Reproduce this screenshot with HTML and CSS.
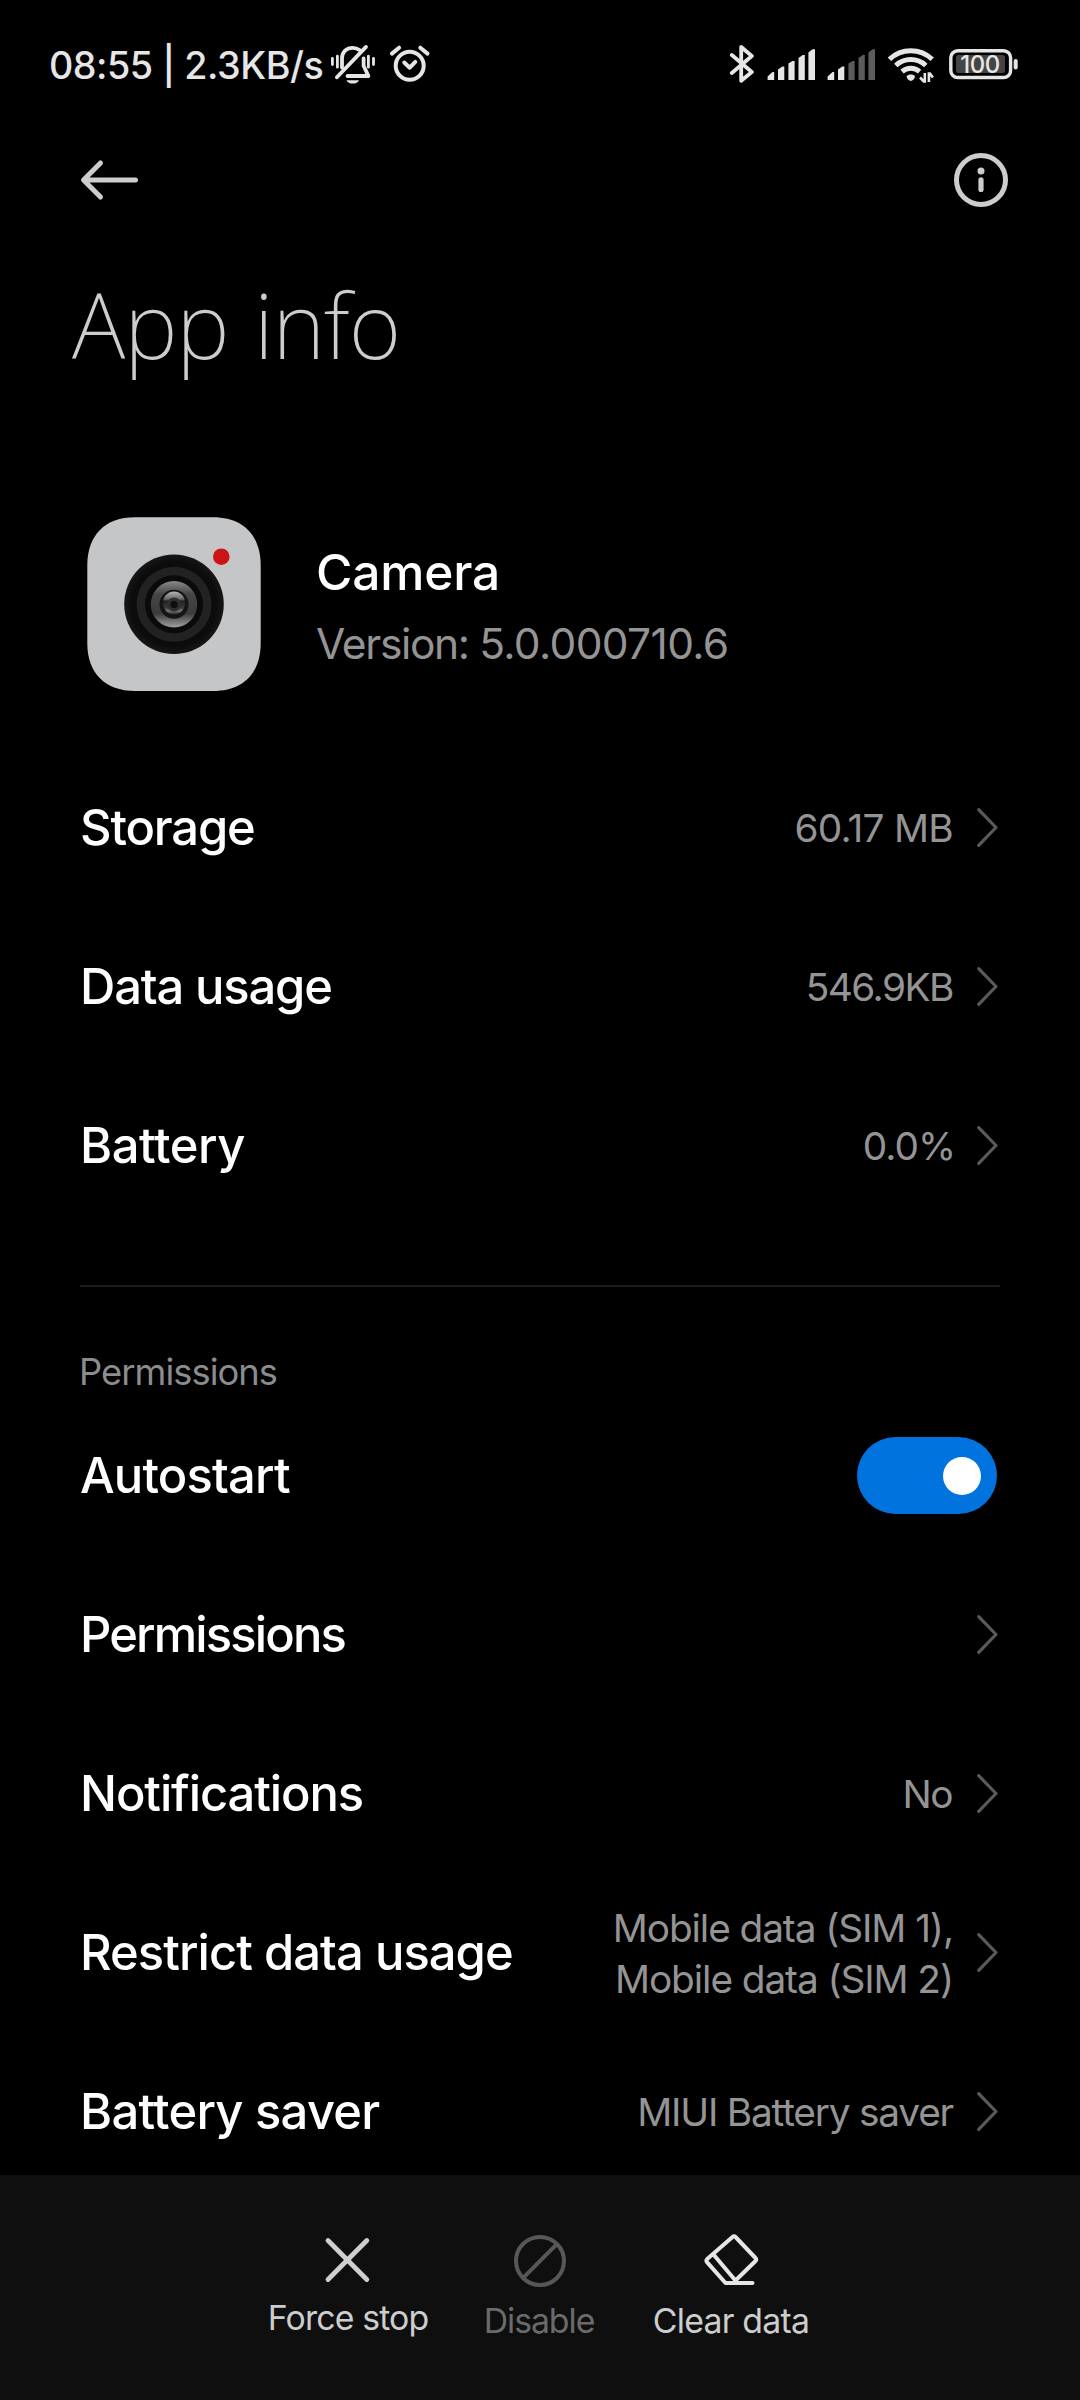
FILE: index.html
```html
<!DOCTYPE html>
<html lang="en">
<head>
<meta charset="utf-8">
<title>App info</title>
<link rel="stylesheet" href="styles.css">
</head>
<body>
<svg class="defs" aria-hidden="true">
  <symbol id="chevron" viewBox="0 0 24 44"><path d="M2.700 3.700 20 21.500 2.700 39.300" fill="none" stroke="#5a5a5a" stroke-width="3.200" stroke-linecap="round" stroke-linejoin="round"/></symbol>
</svg>
<div class="screen">
  <header class="status">
    <span class="status__text">08:55 | 2.3KB/s</span>
    <svg class="status__bell" width="46" height="44" viewBox="0 0 46 44" fill="none" stroke="#e6e6e6" stroke-width="3.800" stroke-linecap="round" stroke-linejoin="round">
      <path d="M2.400 15.300v6.200M7.400 13.200v11M38.400 13.200v11M43.500 15.300v6.200" stroke-width="2.800"/>
      <path d="M12 24.500V15.600C12 9 16.500 4.800 22.700 4.800c2.800 0 5 .8 6.800 2.200M33.600 15.500v7.200l4.800 10.300H17.500"/>
      <path d="M6.900 34.300 36 3.900"/>
      <path d="M16.500 37.200h12.500c-1.500 4.500-11 4.500-12.500 0z" fill="#e6e6e6" stroke="none"/>
    </svg>
    <svg class="status__alarm" width="42" height="44" viewBox="0 0 42 44" fill="none" stroke="#e6e6e6" stroke-width="4" stroke-linecap="round" stroke-linejoin="round">
      <circle cx="20.700" cy="22.700" r="14"/>
      <path d="m15.300 19.500 5.400 5.200 5.600-5.800"/>
      <path d="m2.900 10.600 7.200-5.900M31.300 4.700l7.200 5.900"/>
    </svg>
    <svg class="status__bt" width="25" height="44" viewBox="0 0 25 44" fill="none" stroke="#e6e6e6" stroke-width="3.800" stroke-linecap="round" stroke-linejoin="round"><path d="m2.800 12 20 17L12.200 37.700V4L22.800 13l-20 17"/></svg>
    <svg class="status__signal" width="48" height="44" viewBox="0 0 48 44" fill="#e6e6e6">
      <path d="M.6 37V33.500L5.500 29H7.200V37z"/><path d="M11 37V26.500L15.300 23.500H17.300V37z"/><path d="M21.400 37V20.500L25.500 18H27.600V37z"/><path d="M31.500 37V15L35.700 12H37.800V37z"/><path d="M41.400 37V9.500L45.500 6.300H48V37z"/>
    </svg>
    <svg class="status__signal2" width="48" height="44" viewBox="0 0 48 44" fill="#5c5c5c">
      <path fill="#e6e6e6" d="M.6 37V33.500L5.500 29H7.200V37z"/><path fill="#e6e6e6" d="M11 37V26.500L15.300 23.500H17.300V37z"/><path d="M21.400 37V20.500L25.500 18H27.600V37z"/><path d="M31.500 37V15L35.700 12H37.800V37z"/><path d="M41.400 37V9.500L45.500 6.300H48V37z"/>
    </svg>
    <svg class="status__wifi" width="48" height="44" viewBox="0 0 48 44" fill="none" stroke="#e6e6e6" stroke-width="5">
      <path d="M2.400 16.200a31 31 0 0 1 42.800 0M8.800 22.500a22 22 0 0 1 30 0M15 28.600a13.500 13.500 0 0 1 17.600 0"/>
      <path d="M19.500 33.500c2-2.600 6.600-2.600 8.600 0-.6 2.600-2.600 4.400-4.300 4.400s-3.700-1.800-4.300-4.400z" fill="#e6e6e6" stroke="none"/>
      <path d="M37.800 30v8.500h-1l-3.800-4M41.900 39v-8.500h1l3 4" stroke-width="2.600"/>
    </svg>
    <svg class="status__battery" width="71" height="44" viewBox="0 0 71 44">
      <rect x="2.800" y="7.700" width="59.800" height="26.800" rx="7" fill="none" stroke="#e6e6e6" stroke-width="3.400"/>
      <rect x="8" y="12" width="49" height="18" rx="2.500" fill="#444"/>
      <rect x="65.700" y="16" width="4" height="10.500" rx="2" fill="#e6e6e6"/>
      <text class="status__level" x="32" y="30" text-anchor="middle">100</text>
    </svg>
  </header>

  <nav class="topbar">
    <svg width="64" height="50" viewBox="0 0 64 50" fill="none" stroke="#cdcdcd" stroke-width="5" stroke-linecap="round" stroke-linejoin="round"><path d="M58.500 25H7M23.500 8 6.500 25l17 17"/></svg>
    <svg width="56" height="56" viewBox="0 0 56 56" fill="#cdcdcd"><circle cx="28" cy="28" r="24.500" fill="none" stroke="#cdcdcd" stroke-width="5"/><circle cx="28" cy="19" r="3.500"/><rect x="25.400" y="25.300" width="5.200" height="14.700" rx="2.600"/></svg>
  </nav>

  <h1 class="title">App info</h1>

  <section class="app">
    <svg class="app__icon" width="174" height="174" viewBox="0 0 174 174">
      <defs>
        <radialGradient id="body"><stop offset="0" stop-color="#0b0b0b"/><stop offset=".85" stop-color="#0c0c0c"/><stop offset="1" stop-color="#171717"/></radialGradient>
        <linearGradient id="ring" x1="0" y1="0" x2="0" y2="1"><stop offset="0" stop-color="#888"/><stop offset=".28" stop-color="#464646"/><stop offset=".7" stop-color="#3c3c3c"/><stop offset="1" stop-color="#a0a0a0"/></linearGradient>
        <linearGradient id="glass" x1="0" y1="0" x2="0" y2="1"><stop offset="0" stop-color="#b5b5b5"/><stop offset=".33" stop-color="#686868"/><stop offset=".42" stop-color="#202020"/><stop offset=".7" stop-color="#3a3a3a"/><stop offset=".84" stop-color="#777"/><stop offset="1" stop-color="#222"/></linearGradient>
      </defs>
      <path d="M48 .3h78c30 0 47.700 18 47.700 48v78c0 30-17.700 47.700-47.700 47.700H48C18 174 .3 156.300.3 126.300v-78C.3 18.300 18 .3 48 .3z" fill="#c5c6c8"/>
      <circle cx="87" cy="87.300" r="49.800" fill="url(#body)"/>
      <circle cx="87" cy="87.300" r="37.500" fill="#222"/>
      <circle cx="87" cy="87.300" r="29" fill="#0a0a0a"/>
      <circle cx="87" cy="87.300" r="23.200" fill="url(#ring)"/>
      <circle cx="87" cy="87.300" r="14.500" fill="#151515"/>
      <ellipse cx="87" cy="86" rx="11" ry="11.500" fill="url(#glass)"/>
      <circle cx="87" cy="87.500" r="7" fill="#303030"/>
      <circle cx="87" cy="87.500" r="3.700" fill="#101010"/>
      <circle cx="134.300" cy="39.700" r="8.300" fill="#cc1417"/>
    </svg>
    <div class="app__text">
      <div class="app__name">Camera</div>
      <div class="app__version">Version: <span class="app__number">5.0.000710.6</span></div>
    </div>
  </section>

  <section class="list">
    <div class="row row--storage"><span class="row__label">Storage</span><span class="row__value">60.17 MB</span><svg class="chevron"><use href="#chevron"/></svg></div>
    <div class="row row--data"><span class="row__label">Data usage</span><span class="row__value">546.9KB</span><svg class="chevron"><use href="#chevron"/></svg></div>
    <div class="row row--battery"><span class="row__label">Battery</span><span class="row__value">0.0%</span><svg class="chevron"><use href="#chevron"/></svg></div>
  </section>

  <hr class="divider">

  <section class="list">
    <h2 class="section-title">Permissions</h2>
    <div class="row row--autostart"><span class="row__label">Autostart</span><span class="toggle"><span class="toggle__knob"></span></span></div>
    <div class="row row--permissions"><span class="row__label">Permissions</span><svg class="chevron"><use href="#chevron"/></svg></div>
    <div class="row row--notifications"><span class="row__label">Notifications</span><span class="row__value">No</span><svg class="chevron"><use href="#chevron"/></svg></div>
    <div class="row row--restrict"><span class="row__label">Restrict data usage</span><span class="row__value">Mobile data (SIM 1),<br>Mobile data (SIM 2)</span><svg class="chevron"><use href="#chevron"/></svg></div>
    <div class="row row--saver"><span class="row__label">Battery saver</span><span class="row__value">MIUI Battery saver</span><svg class="chevron"><use href="#chevron"/></svg></div>
  </section>
</div>

<footer class="actions">
  <div class="action action--stop">
    <svg width="64" height="64" viewBox="0 0 64 64" fill="none" stroke="#cfcfcf" stroke-width="4.800" stroke-linecap="round"><path d="m11 11.500 38.800 39M49.800 11.500 11 50.500"/></svg>
    <span class="action__label">Force stop</span>
  </div>
  <div class="action action--disable">
    <svg width="64" height="64" viewBox="0 0 64 64" fill="none" stroke="#575757" stroke-width="4"><circle cx="32" cy="32" r="24"/><path d="m15.200 48.800 33.600-33.600"/></svg>
    <span class="action__label">Disable</span>
  </div>
  <div class="action action--clear">
    <svg width="64" height="64" viewBox="0 0 64 64" fill="none" stroke="#e6e6e6" stroke-width="4" stroke-linecap="round" stroke-linejoin="round"><path d="M33.500 8q1.500-1.500 3 0L56.500 29q1.500 1.500 0 3L36 52M33.500 8 8.200 30q-1.500 1.700 0 3.400L26.500 54h27M14.500 25.500 36 51"/></svg>
    <span class="action__label">Clear data</span>
  </div>
</footer>
</body>
</html>
```
FILE: styles.css
```css
* { box-sizing: border-box; }

body {
  margin: 0;
  width: 1080px;
  height: 2400px;
  overflow: hidden;
  background: #000;
  color: #fff;
  font-family: Inter, Roboto, sans-serif;
  display: flex;
  flex-direction: column;
}

svg { display: block; flex: none; }
.defs { display: none; }

.screen { height: 2175px; flex: none; overflow: hidden; }

/* Status bar */
.status {
  height: 130px;
  padding: 0 61px 0 49px;
  display: flex;
  align-items: center;
  color: #e6e6e6;
}
.status__text {
  width: 281px;
  font-size: 37.7px;
  font-weight: 500;
  letter-spacing: -0.48px;
  white-space: nowrap;
}
.status__alarm { margin-left: 13px; }
.status__bt { margin-left: auto; }
.status__signal { margin-left: 13px; }
.status__signal2 { margin-left: 12px; }
.status__wifi { margin-left: 12px; }
.status__battery { margin-left: 13px; }
.status__level {
  font-size: 24px;
  font-weight: 500;
  letter-spacing: -0.46px;
  fill: #e6e6e6;
}

/* Navigation */
.topbar {
  height: 100px;
  padding: 0 71px 0 77px;
  display: flex;
  align-items: center;
  justify-content: space-between;
}

.title {
  margin: 34px 0 0 72px;
  color: #cdcdcd;
  font: 250 90.3px/120px "Noto Sans", "Open Sans", sans-serif;
  letter-spacing: -1.1px;
  word-spacing: 3px;
}

/* App summary */
.app {
  margin: 133px 0 57px 86.500px;
  height: 174px;
  display: flex;
  align-items: flex-start;
}
.app__text { margin: 25px 0 0 55.500px; }
.app__name {
  font-size: 49.7px;
  line-height: 60px;
  font-weight: 500;
  letter-spacing: -0.21px;
}
.app__version {
  margin-top: 16px;
  color: #949494;
  font-size: 42.5px;
  line-height: 52px;
  letter-spacing: -1.35px;
}
.app__number { letter-spacing: -0.65px; }

/* Setting rows */
.row {
  height: 159px;
  padding: 0 80px;
  display: flex;
  align-items: center;
}
.row__label {
  margin-right: auto;
  font-size: 48.9px;
  font-weight: 500;
  white-space: nowrap;
}
.row__value {
  color: #949494;
  font-size: 38.8px;
  line-height: 51px;
  text-align: right;
  white-space: nowrap;
}
.chevron { width: 24px; height: 44px; margin-left: 23px; }

.row--storage .row__label { letter-spacing: -1.17px; }
.row--storage .row__value { letter-spacing: -0.73px; }
.row--data .row__label { letter-spacing: -1.14px; }
.row--data .row__value { letter-spacing: -1.5px; }
.row--battery .row__label { letter-spacing: -0.4px; }
.row--battery .row__value { letter-spacing: -1.03px; margin-right: -2px; }
.row--autostart .row__label { letter-spacing: -0.81px; }
.row--permissions .row__label { letter-spacing: -1.85px; }
.row--notifications .row__label { letter-spacing: -1.09px; }
.row--notifications .row__value { letter-spacing: -1.49px; margin-right: 1px; }
.row--restrict .row__label { letter-spacing: -0.94px; }
.row--restrict .row__value { letter-spacing: -1.09px; }
.row--saver .row__label { letter-spacing: -0.73px; }
.row--saver .row__value { letter-spacing: -1.2px; }

.divider {
  height: 2px;
  margin: 60px 80px 0;
  border: 0;
  background: #1c1c1c;
}
.section-title {
  margin: 63px 0 2px 79px;
  color: #8c8c8c;
  font-size: 36.3px;
  line-height: 44px;
  font-weight: 400;
  letter-spacing: -0.95px;
}

.toggle {
  width: 140px;
  height: 77px;
  margin-right: 3px;
  padding-right: 16px;
  border-radius: 39px;
  background: #0073de;
  display: flex;
  align-items: center;
  justify-content: flex-end;
}
.toggle__knob {
  width: 38px;
  height: 38px;
  border-radius: 50%;
  background: #fff;
}

/* Bottom actions */
.actions {
  height: 225px;
  padding-top: 54px;
  background: #0f0f0f;
  display: flex;
  justify-content: center;
}
.action {
  width: 191px;
  display: flex;
  flex-direction: column;
  align-items: center;
  color: #cdcdcd;
}
.action__label {
  margin-top: 8px;
  font-size: 33.8px;
  line-height: 40px;
  white-space: nowrap;
}
.action--stop .action__label { margin: 5px 2px 0 0; letter-spacing: -0.86px; }
.action--disable .action__label { margin-right: 2px; letter-spacing: -1.06px; color: #6b6b6b; }
.action--clear .action__label { letter-spacing: -0.77px; }
```
